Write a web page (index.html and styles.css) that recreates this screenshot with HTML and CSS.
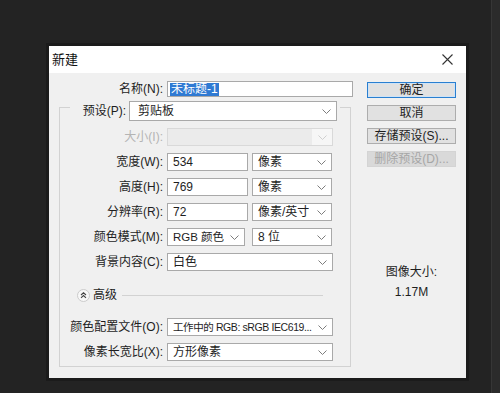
FILE: index.html
```html
<!DOCTYPE html>
<html lang="zh-CN">
<head>
    <meta charset="UTF-8">
    <title>新建</title>
    <link rel="stylesheet" href="styles.css">
</head>
<body>
<div class="screen">
    <div class="desk">
        <div class="dialog">
            <div class="titlebar">
                <span class="title">新建</span>
                <svg class="close" width="11" height="11" viewBox="0 0 11 11">
                    <path d="M0.5 0.5 L10.5 10.5 M10.5 0.5 L0.5 10.5" stroke="#333" stroke-width="1.1" fill="none"/>
                </svg>
            </div>
            <div class="dialog-body">
                <div class="form">
                    <div class="row row-name">
                        <span class="lbl">名称(N):</span>
                        <div class="field w-name"><span class="selected">未标题-1</span></div>
                    </div>

                    <div class="group">
                        <div class="legend">
                            <span class="lbl">预设(P):</span>
                            <div class="field select w-preset"><span class="val">剪贴板</span><svg class="chev" width="9" height="5" viewBox="0 0 9 5"><polyline points="0.5,0.5 4.5,4.5 8.5,0.5"/></svg></div>
                        </div>

                        <div class="row">
                            <span class="lbl off">大小(I):</span>
                            <div class="field combo-off w-full"><span class="fill"></span><span class="drop"><svg class="chev" width="9" height="5" viewBox="0 0 9 5"><polyline points="0.5,0.5 4.5,4.5 8.5,0.5"/></svg></span></div>
                        </div>
                        <div class="row">
                            <span class="lbl">宽度(W):</span>
                            <div class="field w-num">534</div>
                            <div class="field select w-unit"><span class="val">像素</span><svg class="chev" width="9" height="5" viewBox="0 0 9 5"><polyline points="0.5,0.5 4.5,4.5 8.5,0.5"/></svg></div>
                        </div>
                        <div class="row">
                            <span class="lbl">高度(H):</span>
                            <div class="field w-num">769</div>
                            <div class="field select w-unit"><span class="val">像素</span><svg class="chev" width="9" height="5" viewBox="0 0 9 5"><polyline points="0.5,0.5 4.5,4.5 8.5,0.5"/></svg></div>
                        </div>
                        <div class="row">
                            <span class="lbl">分辨率(R):</span>
                            <div class="field w-num">72</div>
                            <div class="field select w-unit"><span class="val">像素/英寸</span><svg class="chev" width="9" height="5" viewBox="0 0 9 5"><polyline points="0.5,0.5 4.5,4.5 8.5,0.5"/></svg></div>
                        </div>
                        <div class="row">
                            <span class="lbl">颜色模式(M):</span>
                            <div class="field select w-mode"><span class="val small">RGB 颜色</span><svg class="chev" width="9" height="5" viewBox="0 0 9 5"><polyline points="0.5,0.5 4.5,4.5 8.5,0.5"/></svg></div>
                            <div class="field select w-bit"><span class="val">8 位</span><svg class="chev" width="9" height="5" viewBox="0 0 9 5"><polyline points="0.5,0.5 4.5,4.5 8.5,0.5"/></svg></div>
                        </div>
                        <div class="row">
                            <span class="lbl">背景内容(C):</span>
                            <div class="field select w-full"><span class="val">白色</span><svg class="chev" width="9" height="5" viewBox="0 0 9 5"><polyline points="0.5,0.5 4.5,4.5 8.5,0.5"/></svg></div>
                        </div>

                        <div class="adv">
                            <svg class="adv-icon" width="13" height="13" viewBox="0 0 13 13">
                                <circle cx="6.5" cy="6.5" r="6" fill="#f8f8f8" stroke="#cbcbcb"/>
                                <polyline points="4,6 6.5,3.8 9,6" fill="none" stroke="#444" stroke-width="1.1"/>
                                <polyline points="4,8.8 6.5,6.6 9,8.8" fill="none" stroke="#444" stroke-width="1.1"/>
                            </svg>
                            <span class="adv-text">高级</span>
                            <span class="adv-line"></span>
                        </div>

                        <div class="row row-after-adv">
                            <span class="lbl">颜色配置文件(O):</span>
                            <div class="field select w-full"><span class="val tight">工作中的 RGB: sRGB IEC619...</span><svg class="chev" width="9" height="5" viewBox="0 0 9 5"><polyline points="0.5,0.5 4.5,4.5 8.5,0.5"/></svg></div>
                        </div>
                        <div class="row">
                            <span class="lbl">像素长宽比(X):</span>
                            <div class="field select w-full"><span class="val">方形像素</span><svg class="chev" width="9" height="5" viewBox="0 0 9 5"><polyline points="0.5,0.5 4.5,4.5 8.5,0.5"/></svg></div>
                        </div>
                    </div>
                </div>

                <div class="actions">
                    <div class="btn btn-primary">确定</div>
                    <div class="btn">取消</div>
                    <div class="btn">存储预设(S)...</div>
                    <div class="btn btn-off">删除预设(D)...</div>
                    <div class="img-size">
                        <div>图像大小:</div>
                        <div>1.17M</div>
                    </div>
                </div>
            </div>
        </div>
    </div>
    <div class="strip"></div>
</div>
</body>
</html>
```

FILE: styles.css
```css
body {
    margin: 0;
    background: #232323;
    font-family: "Liberation Sans", "Noto Sans CJK SC", sans-serif;
    font-size: 12px;
    line-height: 16px;
    color: #1e1e1e;
}
.screen {
    display: flex;
    height: 393px;
    overflow: hidden;
}
.desk {
    flex: 0 0 491px;
    padding: 46px 0 0 49px;
    box-sizing: border-box;
}
.strip {
    flex: 1;
    background: #2b2b2b;
    border-left: 1px solid #363636;
}
.dialog {
    width: 417px;
    height: 332px;
    background: #f0f0f0;
    box-shadow: 0 0 0 3px #1b1b1b;
    display: flex;
    flex-direction: column;
}
.titlebar {
    height: 27px;
    flex: 0 0 27px;
    background: #fff;
    display: flex;
    align-items: center;
    justify-content: space-between;
    padding: 0 13px 0 3px;
}
.title {
    font-size: 13px;
    color: #111;
}
.dialog-body {
    display: flex;
    padding-top: 8px;
}
.form {
    width: 304px;
}
.row {
    display: flex;
    align-items: center;
    height: 18px;
}
.lbl {
    width: 103px;
    margin-right: 4px;
    text-align: right;
    white-space: nowrap;
}
.lbl.off {
    color: #b4b4b4;
}
.row-name {
    height: 16px;
}
.row-name .lbl {
    width: 114px;
}
.field {
    height: 18px;
    box-sizing: border-box;
    border: 1px solid #a9a9a9;
    background: #fff;
    display: flex;
    align-items: center;
    padding-left: 5px;
    white-space: nowrap;
    overflow: hidden;
}
.select {
    justify-content: space-between;
    padding: 0 5px 0 5px;
}
.val {
    min-width: 0;
    overflow: hidden;
}
.val.small {
    font-size: 11.5px;
}
.val.tight {
    font-size: 10.5px;
    letter-spacing: -0.4px;
}
.chev {
    flex: 0 0 9px;
    margin-left: 2px;
}
.chev polyline {
    fill: none;
    stroke: #7d7d7d;
    stroke-width: 1;
}
.w-name {
    width: 186px;
    height: 16px;
    padding-left: 2px;
}
.selected {
    background: #2f7ad3;
    color: #fff;
    padding: 0 1px;
    line-height: 13px;
}
.group {
    margin: 10px 0 0 10px;
    width: 292px;
    box-sizing: border-box;
    border: 1px solid #d2d2d2;
    padding-bottom: 5px;
}
.legend {
    display: flex;
    align-items: center;
    width: fit-content;
    height: 20px;
    margin: -7px 0 0 10px;
    padding: 0 3px;
    background: #f0f0f0;
}
.legend .lbl {
    width: 53px;
    margin-right: 3px;
}
.legend .field {
    height: 20px;
    padding-left: 8px;
}
.w-preset {
    width: 208px;
}
.group .row {
    margin-top: 7px;
}
.w-full {
    width: 166px;
}
.w-num {
    width: 81px;
}
.w-unit {
    width: 80px;
    margin-left: 4px;
}
.w-mode {
    width: 78px;
}
.w-bit {
    width: 80px;
    margin-left: 7px;
}
.combo-off {
    padding: 0;
    border-color: #d9d9d9;
    background: #ebebeb;
}
.combo-off .fill {
    flex: 1;
    height: 100%;
}
.combo-off .drop {
    width: 20px;
    height: 100%;
    background: #f6f6f6;
    display: flex;
    align-items: center;
    justify-content: center;
}
.combo-off .chev {
    margin-left: 0;
}
.combo-off .chev polyline {
    stroke: #cfcfcf;
}
.adv {
    display: flex;
    align-items: center;
    height: 14px;
    margin-top: 17px;
    padding: 0 27px 0 17px;
}
.adv-text {
    margin-left: 3px;
}
.adv-line {
    flex: 1;
    margin-left: 5px;
    border-top: 1px solid #d2d2d2;
}
.group .row-after-adv {
    margin-top: 16px;
}
.actions {
    margin-left: 14px;
    width: 89px;
    padding-top: 1px;
    display: flex;
    flex-direction: column;
    gap: 7px;
}
.btn {
    height: 16px;
    box-sizing: border-box;
    border: 1px solid #adadad;
    background: #e1e1e1;
    display: flex;
    align-items: center;
    justify-content: center;
    line-height: 14px;
    white-space: nowrap;
}
.btn-primary {
    border-color: #2a7fd0;
    box-shadow: inset 0 0 0 1px #cfe3f6;
}
.btn-off {
    color: #a6a6a6;
    background: #d9d9d9;
    border-color: #d4d4d4;
}
.img-size {
    margin-top: 88px;
    line-height: 20px;
    text-align: center;
}
```
